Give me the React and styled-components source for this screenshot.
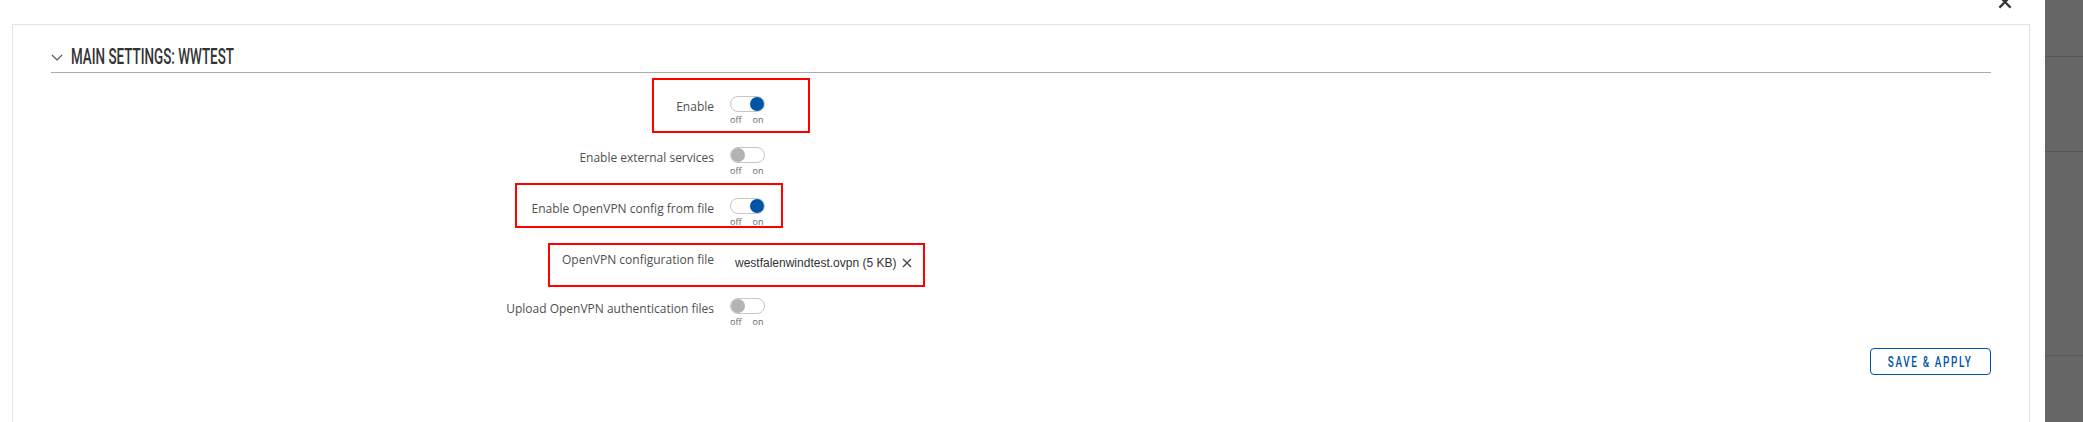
import React from 'react'
import styled, { createGlobalStyle } from 'styled-components'

const GlobalStyle = createGlobalStyle`
  html, body {
    margin: 0;
    padding: 0;
    background: #fff;
    overflow: hidden;
  }
  body {
    font-family: "Open Sans", "Liberation Sans", sans-serif;
  }
  * {
    box-sizing: border-box;
  }
`

const Page = styled.div`
  display: flex;
  width: 2083px;
  height: 422px;
  overflow: hidden;
`

const Main = styled.div`
  position: relative;
  flex: 1;
  padding: 24px 15px 0 12px;
`

const CloseButton = styled.button`
  position: absolute;
  top: -5px;
  left: 1998px;
  width: 14px;
  height: 14px;
  padding: 0;
  border: 0;
  background: none;
  color: #333;
  display: flex;
`

const Sidebar = styled.div`
  width: 38px;
  background: #666;
  display: flex;
  flex-direction: column;
`

const SideBlock = styled.div`
  height: ${p => p.h}px;
  flex-shrink: 0;
  border-bottom: 1px solid #575757;
`

const Panel = styled.section`
  position: relative;
  height: 420px;
  border: 1px solid #e2e2e2;
  padding: 0 38px;
`

const Header = styled.div`
  display: flex;
  align-items: center;
  padding: 19px 0 3px;
  border-bottom: 1px solid #ababab;
`

const Chevron = styled.svg`
  width: 12px;
  height: 7px;
  margin-right: 8px;
  margin-top: 2px;
  flex-shrink: 0;
`

const Title = styled.h2`
  margin: 0;
  font-family: Roboto, "Liberation Sans", sans-serif;
  font-weight: 500;
  font-size: 22px;
  line-height: 25px;
  color: #333;
  white-space: nowrap;
  transform: scaleX(0.61);
  transform-origin: left center;
`

const Form = styled.div`
  margin-top: 23px;
`

const Row = styled.div`
  position: relative;
  display: flex;
  align-items: flex-start;
  gap: 16px;
  height: ${p => p.h || 51}px;
`

const Label = styled.label`
  flex: 0 0 663px;
  text-align: right;
  font-size: 12px;
  line-height: 16px;
  color: #4f4f4f;
  padding-top: 3px;
`

const Highlight = styled.div`
  position: absolute;
  left: ${p => p.x}px;
  top: ${p => p.y}px;
  width: ${p => p.w}px;
  height: ${p => p.hh}px;
  border: 2px solid #ff0000;
  pointer-events: none;
`

const SwitchWrap = styled.div`
  display: flex;
  flex-direction: column;
  align-items: flex-start;
`

const Track = styled.div`
  position: relative;
  width: 35px;
  height: 16px;
  border: 1px solid #c6c6c6;
  border-radius: 8px;
  background: #fff;
`

const Knob = styled.span`
  position: absolute;
  top: 0;
  left: ${p => (p.on ? '19px' : '0')};
  width: 14px;
  height: 14px;
  border-radius: 50%;
  background: ${p => (p.on ? '#0054a6' : '#b3b3b3')};
`

const SwitchText = styled.div`
  display: flex;
  gap: 11px;
  margin-top: 2px;
  font-size: 9px;
  line-height: 12px;
  color: #666;
`

const FileValue = styled.div`
  display: flex;
  align-items: center;
  gap: 6px;
  padding: 6px 0 0 5px;
  font-family: "Liberation Sans", Arial, sans-serif;
  font-size: 12px;
  line-height: 16px;
  color: #333;
`

const RemoveIcon = styled.span`
  display: flex;
  color: #444;
`

const Footer = styled.div`
  display: flex;
  justify-content: flex-end;
`

const SaveButton = styled.button`
  width: 121px;
  height: 27px;
  padding: 0;
  border: 1.5px solid #0054a6;
  border-radius: 4px;
  background: #fff;
  display: flex;
  align-items: center;
  justify-content: center;
  overflow: hidden;
`

const ButtonText = styled.span`
  font-family: Roboto, "Liberation Sans", sans-serif;
  font-weight: 500;
  font-size: 15px;
  letter-spacing: 2.5px;
  color: #0054a6;
  white-space: nowrap;
  transform: scaleX(0.66);
`

const Toggle = ({ on }) => (
  <SwitchWrap>
    <Track>
      <Knob on={on ? 1 : 0} />
    </Track>
    <SwitchText>
      <span>off</span>
      <span>on</span>
    </SwitchText>
  </SwitchWrap>
)

const XIcon = ({ size = 10, stroke = 1.3 }) => (
  <svg width={size} height={size} viewBox="0 0 10 10" fill="none" stroke="currentColor" strokeWidth={stroke}>
    <path d="M1 1 L9 9 M9 1 L1 9" />
  </svg>
)

const App = () => {
  return (
    <Page>
      <GlobalStyle />
      <Main>
        <CloseButton>
          <XIcon size={14} stroke={1.6} />
        </CloseButton>
        <Panel>
          <Header>
            <Chevron viewBox="0 0 12 7" fill="none" stroke="#555" strokeWidth="1.2">
              <path d="M1 1 L6 6 L11 1" />
            </Chevron>
            <Title>MAIN SETTINGS: WWTEST</Title>
          </Header>

          <Form>
            <Row>
              <Label>Enable</Label>
              <Toggle on />
              <Highlight x={601} y={-18} w={158} hh={55} />
            </Row>
            <Row>
              <Label>Enable external services</Label>
              <Toggle />
            </Row>
            <Row>
              <Label>Enable OpenVPN config from file</Label>
              <Toggle on />
              <Highlight x={464} y={-15} w={268} hh={45} />
            </Row>
            <Row h={49}>
              <Label>OpenVPN configuration file</Label>
              <FileValue>
                <span>westfalenwindtest.ovpn (5 KB)</span>
                <RemoveIcon>
                  <XIcon />
                </RemoveIcon>
              </FileValue>
              <Highlight x={497} y={-6} w={377} hh={44} />
            </Row>
            <Row h={50}>
              <Label>Upload OpenVPN authentication files</Label>
              <Toggle />
            </Row>
          </Form>

          <Footer>
            <SaveButton>
              <ButtonText>SAVE &amp; APPLY</ButtonText>
            </SaveButton>
          </Footer>
        </Panel>
      </Main>
      <Sidebar>
        <SideBlock h={57} />
        <SideBlock h={95} />
        <SideBlock h={204} />
      </Sidebar>
    </Page>
  )
}

export default App
